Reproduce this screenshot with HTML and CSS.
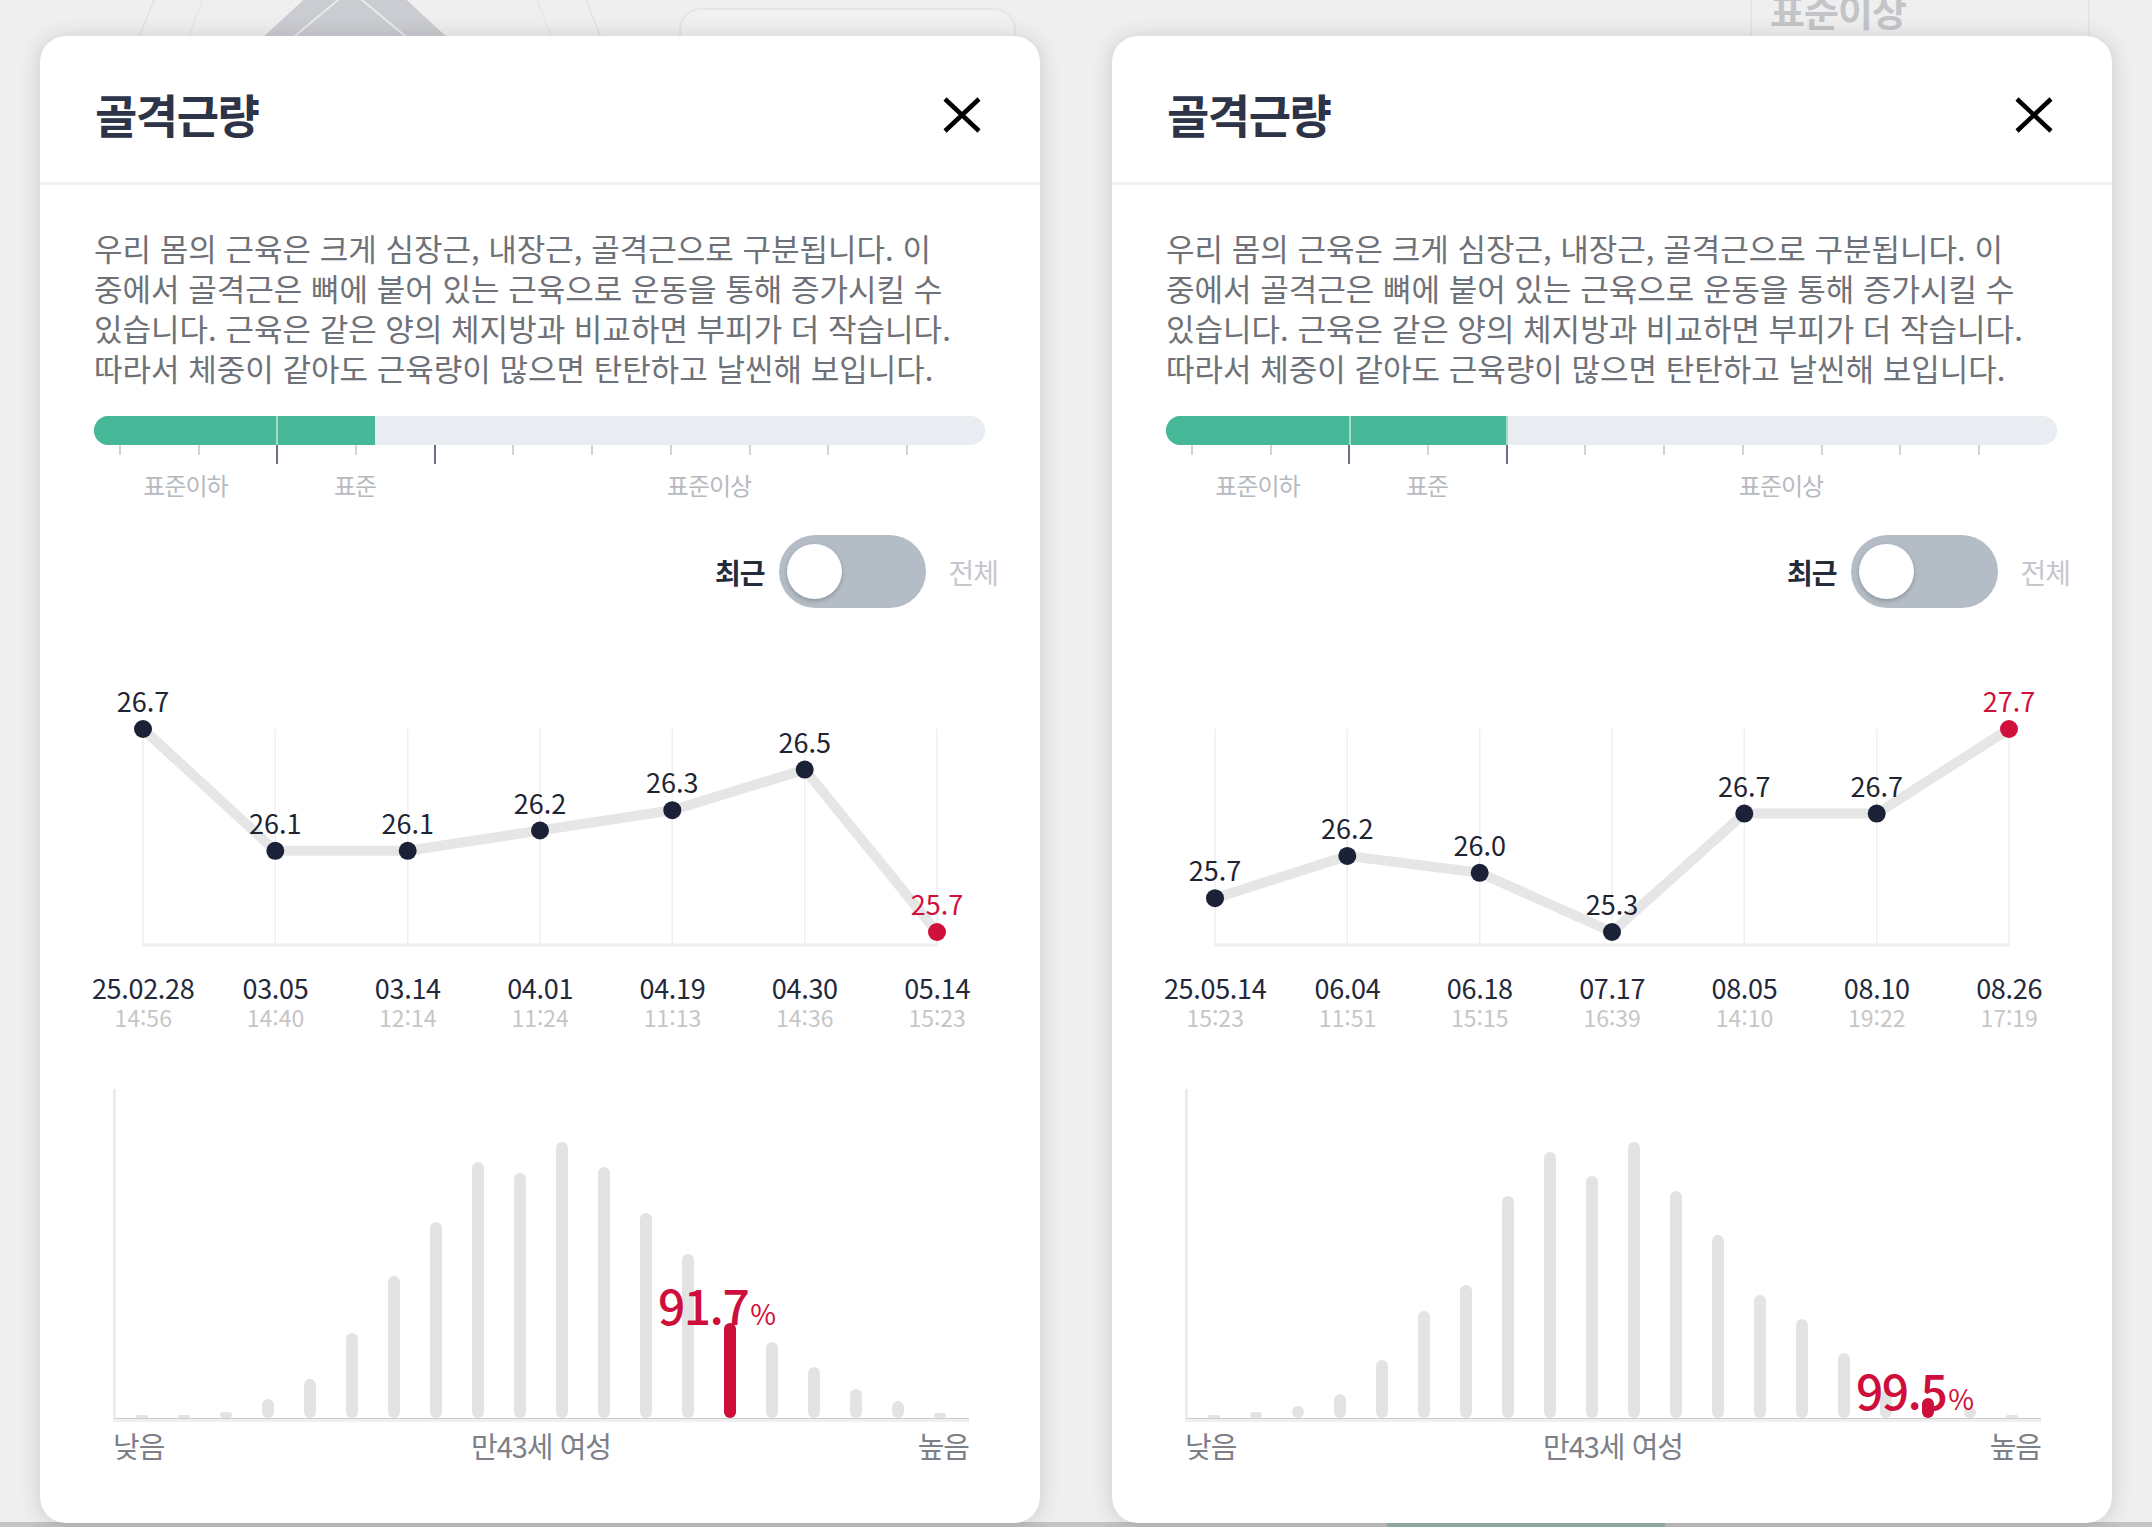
FILE: index.html
```html
<!DOCTYPE html>
<html lang="ko">
<head>
<meta charset="utf-8">
<title>골격근량</title>
<link rel="stylesheet" href="styles.css">
</head>
<body>
<div class="backdrop">
  <svg class="bd-radar" width="520" height="60" viewBox="0 0 520 60">
    <polygon points="20,60 60,-40 460,-40 500,60" fill="none" stroke="#e2e2e2" stroke-width="1.5"/>
    <polygon points="70,60 100,-20 420,-20 450,60" fill="none" stroke="#e6e6e6" stroke-width="1.5"/>
    <polygon points="150,40 215,-20 275,-20 340,40" fill="#caccd1"/>
    <polygon points="180,40 240,-10 300,40" fill="none" stroke="#e9eaec" stroke-width="2"/>
  </svg>
  <div class="bd-box"></div>
  <div class="bd-panel"><span>표준이상</span></div>
  <div class="bd-strip"><span class="bd-green"></span></div>
</div>

<main class="stage">
  <!-- LEFT CARD -->
  <section class="card">
    <header class="card-head">
      <h2 class="title">골격근량</h2>
      <span class="close"><svg width="40" height="36" viewBox="0 0 40 36"><path d="M3 2 L37 34 M37 2 L3 34" stroke="#000" stroke-width="4.5" fill="none"/></svg></span>
    </header>
    <div class="card-body">
      <p class="desc">우리 몸의 근육은 크게 심장근, 내장근, 골격근으로 구분됩니다. 이<br>중에서 골격근은 뼈에 붙어 있는 근육으로 운동을 통해 증가시킬 수<br>있습니다. 근육은 같은 양의 체지방과 비교하면 부피가 더 작습니다.<br>따라서 체중이 같아도 근육량이 많으면 탄탄하고 날씬해 보입니다.</p>

      <div class="gauge">
        <div class="track">
          <div class="fill"><span class="seg" style="width:182px"></span><span class="seg" style="width:97px"></span></div>
        </div>
        <div class="ticks">
          <i class="tick"></i><i class="tick"></i><i class="tick major"></i><i class="tick"></i><i class="tick major"></i><i class="tick"></i><i class="tick"></i><i class="tick"></i><i class="tick"></i><i class="tick"></i><i class="tick"></i>
        </div>
        <div class="gauge-labels"><span>표준이하</span><span>표준</span><span>표준이상</span></div>
      </div>

      <div class="toggle">
        <span class="t-on">최근</span>
        <span class="switch"><span class="knob"></span></span>
        <span class="t-off">전체</span>
      </div>

      <svg class="trend" width="891" height="365" viewBox="0 0 891 365">
        <g class="grid">
          <line x1="49" y1="121" x2="49" y2="337"/><line x1="181.3" y1="121" x2="181.3" y2="337"/><line x1="313.7" y1="121" x2="313.7" y2="337"/><line x1="446" y1="121" x2="446" y2="337"/><line x1="578.3" y1="121" x2="578.3" y2="337"/><line x1="710.7" y1="121" x2="710.7" y2="337"/><line x1="843" y1="121" x2="843" y2="337"/>
        </g>
        <line class="base" x1="49" y1="337" x2="843" y2="337"/>
        <polyline class="path" points="49,121 181.3,242.8 313.7,242.8 446,222.5 578.3,202.2 710.7,161.6 843,324"/>
        <g class="dots">
          <circle cx="49" cy="121" r="9"/><circle cx="181.3" cy="242.8" r="9"/><circle cx="313.7" cy="242.8" r="9"/><circle cx="446" cy="222.5" r="9"/><circle cx="578.3" cy="202.2" r="9"/><circle cx="710.7" cy="161.6" r="9"/><circle class="hot" cx="843" cy="324" r="9"/>
        </g>
        <g class="val">
          <text x="49" y="104">26.7</text><text x="181.3" y="226">26.1</text><text x="313.7" y="226">26.1</text><text x="446" y="205.5">26.2</text><text x="578.3" y="185">26.3</text><text x="710.7" y="144.6">26.5</text><text class="hot" x="843" y="307">25.7</text>
        </g>
      </svg>
      <div class="stamps">
        <div class="stamp"><span class="d">25.02.28</span><span class="t">14:56</span></div>
        <div class="stamp"><span class="d">03.05</span><span class="t">14:40</span></div>
        <div class="stamp"><span class="d">03.14</span><span class="t">12:14</span></div>
        <div class="stamp"><span class="d">04.01</span><span class="t">11:24</span></div>
        <div class="stamp"><span class="d">04.19</span><span class="t">11:13</span></div>
        <div class="stamp"><span class="d">04.30</span><span class="t">14:36</span></div>
        <div class="stamp"><span class="d">05.14</span><span class="t">15:23</span></div>
      </div>

      <div class="dist">
        <div class="plot">
          <i class="bar" style="height:3px"></i><i class="bar" style="height:3px"></i><i class="bar" style="height:6px"></i><i class="bar" style="height:19px"></i><i class="bar" style="height:39px"></i><i class="bar" style="height:85px"></i><i class="bar" style="height:142px"></i><i class="bar" style="height:196px"></i><i class="bar" style="height:256px"></i><i class="bar" style="height:245px"></i><i class="bar" style="height:276px"></i><i class="bar" style="height:251px"></i><i class="bar" style="height:205px"></i><i class="bar" style="height:164px"></i><i class="bar hot" style="height:95px"></i><i class="bar" style="height:76px"></i><i class="bar" style="height:51px"></i><i class="bar" style="height:29px"></i><i class="bar" style="height:17px"></i><i class="bar" style="height:5px"></i>
          <span class="pct" style="left:601px;bottom:81px"><b>91.7</b><small>%</small></span>
        </div>
        <div class="axis"><span>낮음</span><span>만43세 여성</span><span>높음</span></div>
      </div>
    </div>
  </section>

  <!-- RIGHT CARD -->
  <section class="card">
    <header class="card-head">
      <h2 class="title">골격근량</h2>
      <span class="close"><svg width="40" height="36" viewBox="0 0 40 36"><path d="M3 2 L37 34 M37 2 L3 34" stroke="#000" stroke-width="4.5" fill="none"/></svg></span>
    </header>
    <div class="card-body">
      <p class="desc">우리 몸의 근육은 크게 심장근, 내장근, 골격근으로 구분됩니다. 이<br>중에서 골격근은 뼈에 붙어 있는 근육으로 운동을 통해 증가시킬 수<br>있습니다. 근육은 같은 양의 체지방과 비교하면 부피가 더 작습니다.<br>따라서 체중이 같아도 근육량이 많으면 탄탄하고 날씬해 보입니다.</p>

      <div class="gauge">
        <div class="track">
          <div class="fill fill-end"><span class="seg" style="width:183px"></span><span class="seg" style="width:155px"></span></div>
        </div>
        <div class="ticks">
          <i class="tick"></i><i class="tick"></i><i class="tick major"></i><i class="tick"></i><i class="tick major"></i><i class="tick"></i><i class="tick"></i><i class="tick"></i><i class="tick"></i><i class="tick"></i><i class="tick"></i>
        </div>
        <div class="gauge-labels"><span>표준이하</span><span>표준</span><span>표준이상</span></div>
      </div>

      <div class="toggle">
        <span class="t-on">최근</span>
        <span class="switch"><span class="knob"></span></span>
        <span class="t-off">전체</span>
      </div>

      <svg class="trend" width="891" height="365" viewBox="0 0 891 365">
        <g class="grid">
          <line x1="49" y1="121" x2="49" y2="337"/><line x1="181.3" y1="121" x2="181.3" y2="337"/><line x1="313.7" y1="121" x2="313.7" y2="337"/><line x1="446" y1="121" x2="446" y2="337"/><line x1="578.3" y1="121" x2="578.3" y2="337"/><line x1="710.7" y1="121" x2="710.7" y2="337"/><line x1="843" y1="121" x2="843" y2="337"/>
        </g>
        <line class="base" x1="49" y1="337" x2="843" y2="337"/>
        <polyline class="path" points="49,290.2 181.3,247.9 313.7,264.8 446,324 578.3,205.6 710.7,205.6 843,121"/>
        <g class="dots">
          <circle cx="49" cy="290.2" r="9"/><circle cx="181.3" cy="247.9" r="9"/><circle cx="313.7" cy="264.8" r="9"/><circle cx="446" cy="324" r="9"/><circle cx="578.3" cy="205.6" r="9"/><circle cx="710.7" cy="205.6" r="9"/><circle class="hot" cx="843" cy="121" r="9"/>
        </g>
        <g class="val">
          <text x="49" y="273.2">25.7</text><text x="181.3" y="230.9">26.2</text><text x="313.7" y="247.8">26.0</text><text x="446" y="307">25.3</text><text x="578.3" y="188.6">26.7</text><text x="710.7" y="188.6">26.7</text><text class="hot" x="843" y="104">27.7</text>
        </g>
      </svg>
      <div class="stamps">
        <div class="stamp"><span class="d">25.05.14</span><span class="t">15:23</span></div>
        <div class="stamp"><span class="d">06.04</span><span class="t">11:51</span></div>
        <div class="stamp"><span class="d">06.18</span><span class="t">15:15</span></div>
        <div class="stamp"><span class="d">07.17</span><span class="t">16:39</span></div>
        <div class="stamp"><span class="d">08.05</span><span class="t">14:10</span></div>
        <div class="stamp"><span class="d">08.10</span><span class="t">19:22</span></div>
        <div class="stamp"><span class="d">08.26</span><span class="t">17:19</span></div>
      </div>

      <div class="dist">
        <div class="plot">
          <i class="bar" style="height:3px"></i><i class="bar" style="height:6px"></i><i class="bar" style="height:12px"></i><i class="bar" style="height:24px"></i><i class="bar" style="height:58px"></i><i class="bar" style="height:107px"></i><i class="bar" style="height:133px"></i><i class="bar" style="height:222px"></i><i class="bar" style="height:266px"></i><i class="bar" style="height:242px"></i><i class="bar" style="height:276px"></i><i class="bar" style="height:227px"></i><i class="bar" style="height:183px"></i><i class="bar" style="height:123px"></i><i class="bar" style="height:99px"></i><i class="bar" style="height:65px"></i><i class="bar" style="height:28px"></i><i class="bar hot" style="height:20px"></i><i class="bar" style="height:11px"></i><i class="bar" style="height:3px"></i>
          <span class="pct" style="left:727px;bottom:-4px"><b>99.5</b><small>%</small></span>
        </div>
        <div class="axis"><span>낮음</span><span>만43세 여성</span><span>높음</span></div>
      </div>
    </div>
  </section>
</main>
</body>
</html>
```

FILE: styles.css
```css
* { box-sizing: border-box; margin: 0; padding: 0; }

html, body { width: 2152px; height: 1527px; }

body {
  position: relative;
  overflow: hidden;
  background: #efefef;
  font-family: "Noto Sans CJK KR", "Noto Sans", sans-serif;
  color: #222;
}

/* dimmed page behind the dialogs */
.backdrop { position: absolute; inset: 0; pointer-events: none; }
.bd-radar { position: absolute; left: 110px; top: 0; }
.bd-box {
  position: absolute; left: 679px; top: 8px; width: 337px; height: 70px;
  border: 2px solid #e5e5e5; border-radius: 22px; background: #f1f1f1;
}
.bd-panel {
  position: absolute; left: 1750px; top: 0; width: 340px; height: 60px;
  border-left: 2px solid #e6e6e6; border-right: 2px solid #e6e6e6;
  padding-left: 18px;
  overflow: hidden;
}
.bd-panel span {
  display: block; margin-top: -12px;
  font-size: 38px; line-height: 44px; font-weight: 700; color: #c2c4c8; letter-spacing: -1px;
}
.bd-strip {
  position: absolute; left: 0; right: 0; bottom: 0; height: 5px;
  background: #c4c4c4;
}
.bd-green { position: absolute; left: 1387px; width: 278px; top: 0; bottom: 0; background: #98b6a9; }

/* dialogs */
.stage {
  position: relative;
  display: flex;
  gap: 72px;
  padding: 36px 0 0 40px;
}

.card {
  width: 1000px;
  height: 1487px;
  background: #fff;
  border-radius: 26px;
  box-shadow: 0 2px 22px rgba(0, 0, 0, 0.16);
  overflow: hidden;
  flex: none;
}

.card-head {
  height: 149px;
  border-bottom: 3px solid #f1f2f4;
  display: flex;
  align-items: center;
  justify-content: space-between;
  padding: 8px 58px 0 55px;
}

.title {
  font-size: 46px;
  font-weight: 700;
  letter-spacing: -1.5px;
  line-height: 1;
  color: #2e3447;
}

.close { display: block; width: 40px; height: 36px; margin-top: 4px; }
.close svg { display: block; }

.card-body { padding: 43px 55px 0 54px; }

.desc {
  font-size: 31px;
  line-height: 40px;
  letter-spacing: 0;
  color: #6e7177;
  white-space: nowrap;
}

/* gauge */
.gauge { margin-top: 28px; }

.track {
  height: 29px;
  border-radius: 15px;
  background: #e9ecf0;
  overflow: hidden;
  display: flex;
}

.fill { display: flex; gap: 2px; height: 100%; background: #a6ddca; }
.fill-end { padding-right: 2px; }
.seg { display: block; height: 100%; background: #47b897; }

.ticks {
  display: flex;
  justify-content: space-between;
  align-items: flex-start;
  margin-left: 25px;
  width: 789px;
  height: 19px;
}
.tick { display: block; width: 2px; height: 10px; background: #d0d4d9; }
.tick.major { height: 19px; background: #6b7080; }

.gauge-labels {
  display: grid;
  grid-template-columns: 183px 156px 1fr;
  margin-top: 9px;
  font-size: 24px;
  line-height: 24px;
  letter-spacing: -1px;
  color: #b6babf;
  text-align: center;
}

/* toggle */
.toggle {
  display: flex;
  justify-content: flex-end;
  align-items: center;
  height: 73px;
  margin-top: 38px;
  margin-right: -13px;
}
.t-on { font-size: 28px; font-weight: 700; letter-spacing: -1px; color: #262b3a; margin-right: 15px; }
.t-off { font-size: 28px; letter-spacing: -1px; color: #c5c8cd; margin-left: 22px; }
.switch {
  display: flex;
  align-items: center;
  width: 147px;
  height: 73px;
  border-radius: 37px;
  background: #b4bcc5;
  padding: 0 8px;
}
.knob {
  display: block;
  width: 55px;
  height: 55px;
  border-radius: 50%;
  background: #fff;
  box-shadow: 0 2px 4px rgba(0, 0, 0, 0.22);
}

/* trend chart */
.trend { display: block; overflow: visible; }
.trend .grid line { stroke: #efefef; stroke-width: 1.5; }
.trend .base { stroke: #ededed; stroke-width: 3; }
.trend .path { fill: none; stroke: #e6e6e6; stroke-width: 10; stroke-linejoin: round; stroke-linecap: round; }
.trend .dots circle { fill: #1b2136; }
.trend .dots circle.hot { fill: #d0103b; }
.trend text { text-anchor: middle; font-family: "Noto Sans CJK KR", "Noto Sans", sans-serif; }
.trend .val text { font-size: 27px; fill: #1f2433; }
.trend .val text.hot { fill: #d0103b; }

.stamps {
  display: grid;
  grid-template-columns: repeat(7, 132.33px);
  margin-left: -17px;
  text-align: center;
}
.stamp { display: flex; flex-direction: column; align-items: center; white-space: nowrap; }
.stamp .d { font-size: 27px; line-height: 29px; letter-spacing: -0.3px; color: #23283a; }
.stamp .t { font-size: 23px; line-height: 24px; margin-top: 3px; color: #c6c6c6; }

/* distribution */
.dist { margin-top: 60px; }

.plot {
  position: relative;
  margin-left: 19px;
  width: 856px;
  height: 330px;
  border-left: 3px solid #ececec;
  border-bottom: 1px solid #cbcbcb;
  box-shadow: 0 3px 0 #f0f0f0;
  display: flex;
  align-items: flex-end;
  gap: 30px;
  padding-left: 20px;
}

.bar { display: block; flex: none; width: 12px; border-radius: 6px; background: #e3e3e3; }
.bar.hot { background: #cf0f3b; }

.pct {
  position: absolute;
  transform: translateX(-50%);
  white-space: nowrap;
  color: #cf0f3b;
  font-size: 48px;
  line-height: 48px;
  font-weight: 500;
}
.pct b { font-size: 48px; font-weight: 500; letter-spacing: -1.5px; }
.pct small { font-size: 28px; font-weight: 400; margin-left: 2px; }

.axis {
  display: flex;
  justify-content: space-between;
  margin: 9px 0 0 19px;
  width: 856px;
  font-size: 29px;
  line-height: 34px;
  letter-spacing: -1px;
  color: #7d8088;
}
```
